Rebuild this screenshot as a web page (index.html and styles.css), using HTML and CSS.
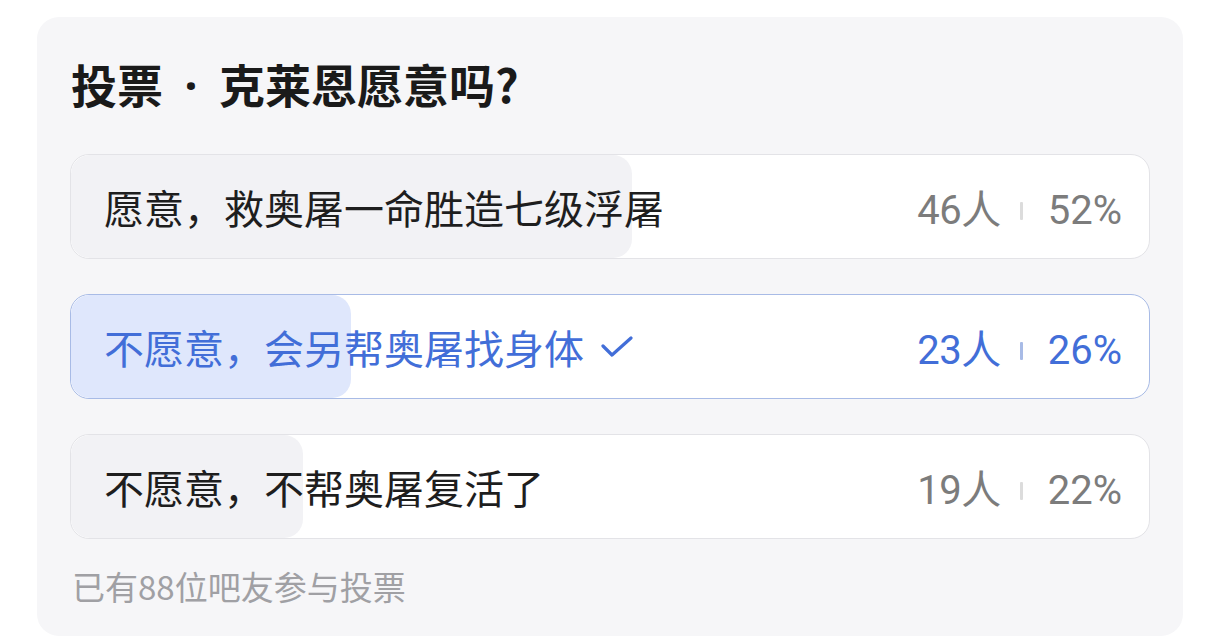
FILE: index.html
```html
<!DOCTYPE html>
<html lang="zh-CN">
<head>
<meta charset="utf-8">
<title>投票</title>
<link rel="stylesheet" href="styles.css">
</head>
<body>
<div class="card">
  <h1 class="title">投票<span class="dot">·</span>克莱恩愿意吗?</h1>
  <div class="options">
    <div class="option">
      <div class="fill" style="width:52%"></div>
      <span class="label">愿意，救奥屠一命胜造七级浮屠</span>
      <span class="stats"><span class="count">46人</span><span class="sep"></span><span class="pct">52%</span></span>
    </div>
    <div class="option selected">
      <div class="fill" style="width:26%"></div>
      <span class="label">不愿意，会另帮奥屠找身体<svg class="check" width="32" height="22" viewBox="0 0 32 22"><path d="M2 10 L11 19 L30 2" fill="none" stroke="currentColor" stroke-width="3.2" stroke-linecap="round" stroke-linejoin="round"/></svg></span>
      <span class="stats"><span class="count">23人</span><span class="sep"></span><span class="pct">26%</span></span>
    </div>
    <div class="option">
      <div class="fill" style="width:21.5%"></div>
      <span class="label">不愿意，不帮奥屠复活了</span>
      <span class="stats"><span class="count">19人</span><span class="sep"></span><span class="pct">22%</span></span>
    </div>
  </div>
  <div class="footer">已有88位吧友参与投票</div>
</div>
</body>
</html>
```

FILE: styles.css
```css
html, body {
  margin: 0;
  padding: 0;
  background: #ffffff;
}
body {
  font-family: "Noto Sans CJK SC", "Noto Sans", sans-serif;
  padding: 17px 37px 0 37px;
}
.card {
  width: 1146px;
  height: 619px;
  box-sizing: border-box;
  background: #f6f6f8;
  border-radius: 22px;
  padding: 40px 33px 0 33px;
}
.title {
  margin: 0 0 43px 1px;
  font-size: 46px;
  line-height: 52px;
  font-weight: 700;
  color: #1a1a1a;
}
.dot {
  display: inline-block;
  width: 56px;
  text-align: center;
  font-family: "Noto Sans", sans-serif;
}
.options {
  display: flex;
  flex-direction: column;
  gap: 35px;
}
.option {
  position: relative;
  height: 105px;
  box-sizing: border-box;
  border: 1px solid #e3e3e7;
  border-radius: 19px;
  background: #ffffff;
  overflow: hidden;
  display: flex;
  align-items: center;
  justify-content: space-between;
  padding: 0 27px 0 33px;
}
.fill {
  position: absolute;
  left: 0;
  top: 0;
  bottom: 0;
  background: #f2f2f5;
  border-radius: 19px;
}
.label {
  position: relative;
  font-size: 40px;
  color: #1e1e1e;
  display: flex;
  align-items: center;
}
.stats {
  position: relative;
  display: flex;
  align-items: baseline;
  margin-top: 8px;
  font-size: 40px;
  line-height: 58px;
  font-family: Roboto, "Noto Sans CJK SC", sans-serif;
  color: #7c7c7c;
}
.count {
  letter-spacing: -0.5px;
}
.sep {
  align-self: center;
  width: 3px;
  height: 18px;
  background: #dcdcdc;
  margin: 0 25px 0 19px;
  border-radius: 1px;
}
.selected {
  border-color: #a8bbe6;
}
.selected .fill {
  background: #dfe7fc;
}
.selected .label,
.selected .stats {
  color: #426ed8;
}
.selected .sep {
  background: #a8bbe6;
}
.check {
  margin-left: 17px;
  color: #426ed8;
}
.footer {
  margin: 27px 0 0 2px;
  font-size: 33px;
  line-height: 40px;
  color: #a0a0a4;
}
```
